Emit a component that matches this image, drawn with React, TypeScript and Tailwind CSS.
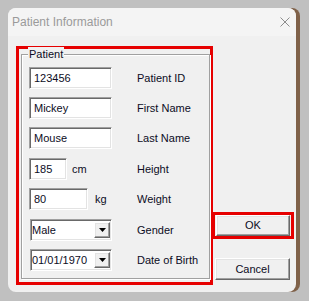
import React from "react";

const sunken =
  "border border-t-[#a0a0a0] border-l-[#a0a0a0] border-b-white border-r-white shadow-[inset_1px_1px_0_#696969,inset_-1px_-1px_0_#e3e3e3] bg-white";
const raised =
  "border border-t-white border-l-white border-b-[#696969] border-r-[#696969] shadow-[inset_-1px_-1px_0_#a0a0a0,inset_1px_1px_0_#e3e3e3] bg-[#f0f0f0]";

function TextBox({ value, w }: { value: string; w: string }) {
  return (
    <div className={`${sunken} ${w} h-[22px] flex items-center pl-[4px]`}>
      <span>{value}</span>
    </div>
  );
}

function Combo({ value }: { value: string }) {
  return (
    <div className={`${sunken} ml-[1px] w-[82px] h-[22px] flex items-center pl-[1px] pr-[1px]`}>
      <span className="flex-1">{value}</span>
      <div className={`${raised} w-[16px] h-[16px] flex items-center justify-center`}>
        <svg width="7" height="4" viewBox="0 0 7 4">
          <polygon points="0,0 7,0 3.5,4" fill="#000" />
        </svg>
      </div>
    </div>
  );
}

export default function App() {
  return (
    <div
      className="w-[309px] h-[301px] bg-[#c0c0c0] pt-[8px] pl-[8px] text-[11px] text-[#0c0c24]"
      style={{ fontFamily: '"Liberation Sans", Arial, sans-serif' }}
    >
      <div className="relative w-[288px] h-[284px] rounded-[8px] bg-[#f0f0f0] shadow-[4px_0_0_#7f6149]">
        <div className="h-[28px] rounded-t-[8px] bg-[#f4f4f4] flex items-center justify-between pl-[4px] pr-[6px]">
          <span className="text-[12px] text-[#9a9a9a]">Patient Information</span>
          <svg width="10" height="10" viewBox="0 0 10 10">
            <path d="M0.5 0.5 L9.5 9.5 M9.5 0.5 L0.5 9.5" stroke="#8c8c8c" strokeWidth="1" />
          </svg>
        </div>
        <div className="flex items-start pl-[8px] pt-[10px]">
          <div className="w-[197px] h-[239px] border-[3px] border-[#e60000]">
            <div className="relative ml-[2px] mt-[5px] w-[189px] h-[225px] border border-[#a0a0a0] shadow-[inset_1px_1px_0_#fff,1px_1px_0_#fff] pl-[7px] pt-[12px]">
              <span className="absolute left-[6px] top-[-8px] bg-[#f0f0f0] px-[1px] leading-[14px]">
                Patient
              </span>
              <div className="flex flex-col gap-[8px]">
                <div className="grid grid-cols-[108px_1fr] items-center">
                  <TextBox value="123456" w="w-[83px]" />
                  <span>Patient ID</span>
                </div>
                <div className="grid grid-cols-[108px_1fr] items-center">
                  <TextBox value="Mickey" w="w-[83px]" />
                  <span>First Name</span>
                </div>
                <div className="grid grid-cols-[108px_1fr] items-center">
                  <TextBox value="Mouse" w="w-[83px]" />
                  <span>Last Name</span>
                </div>
                <div className="grid grid-cols-[108px_1fr] items-center mt-[1px]">
                  <div className="flex items-center gap-[5px]">
                    <TextBox value="185" w="w-[38px]" />
                    <span>cm</span>
                  </div>
                  <span>Height</span>
                </div>
                <div className="grid grid-cols-[108px_1fr] items-center">
                  <div className="flex items-center gap-[7px]">
                    <TextBox value="80" w="w-[59px]" />
                    <span>kg</span>
                  </div>
                  <span>Weight</span>
                </div>
                <div className="grid grid-cols-[108px_1fr] items-center mt-[1px]">
                  <Combo value="Male" />
                  <span>Gender</span>
                </div>
                <div className="grid grid-cols-[108px_1fr] items-center">
                  <Combo value="01/01/1970" />
                  <span>Date of Birth</span>
                </div>
              </div>
            </div>
          </div>
          <div className="ml-[-1px] flex flex-col">
            <div className="mt-[166px] w-[82px] h-[27px] border-[3px] border-[#e60000] pl-[1px]">
              <div className={`${raised} w-[74px] h-[21px] flex items-center justify-center`}>OK</div>
            </div>
            <div className={`${raised} mt-[19px] ml-[3px] w-[75px] h-[22px] flex items-center justify-center`}>
              Cancel
            </div>
          </div>
        </div>
      </div>
    </div>
  );
}
